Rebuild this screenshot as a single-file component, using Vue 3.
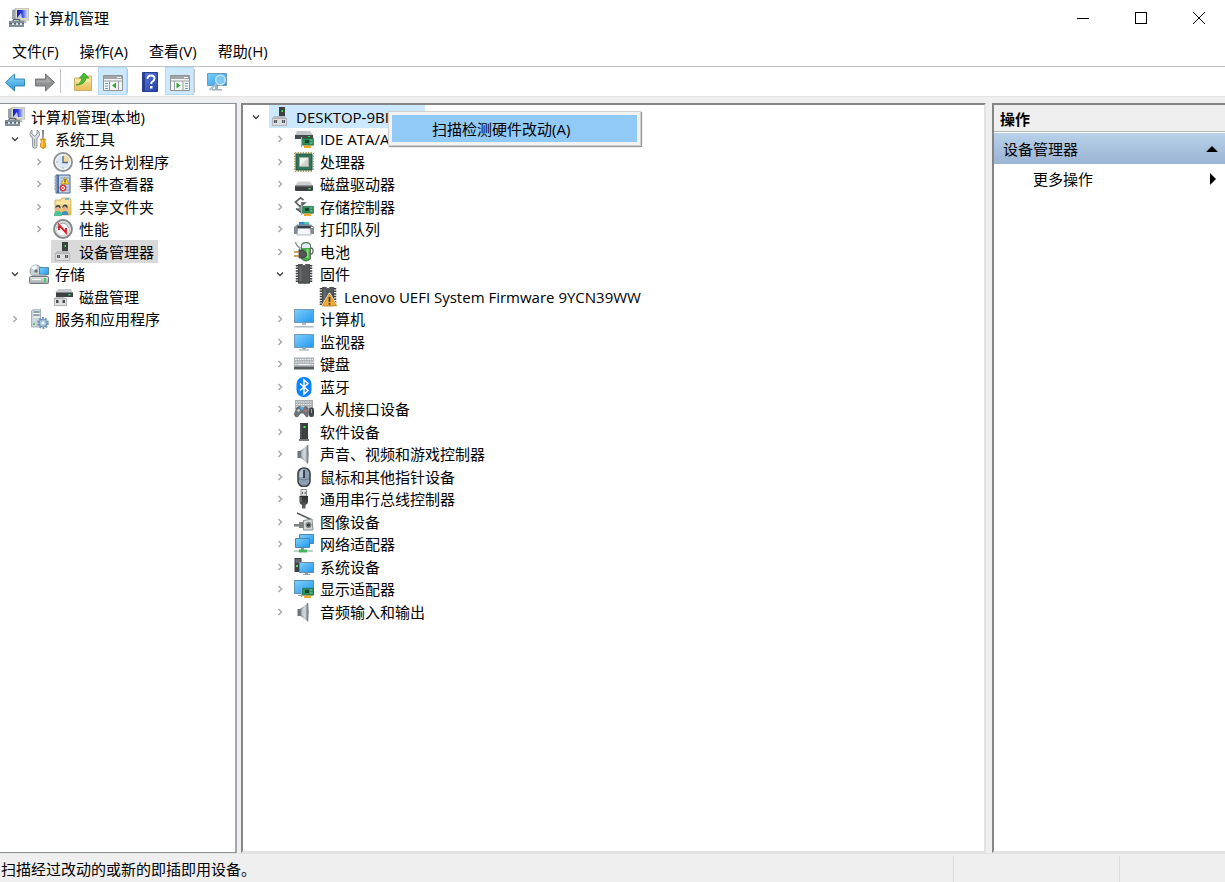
<script setup>
import { ref } from 'vue'

const menus = ['文件(F)', '操作(A)', '查看(V)', '帮助(H)']

const consoleTree = [
  { text: '计算机管理(本地)', icon: 'computer-mgmt', level: 0 },
  { text: '系统工具', icon: 'tools', level: 0, state: 'open' },
  { text: '任务计划程序', icon: 'clock', level: 1, state: 'closed' },
  { text: '事件查看器', icon: 'events', level: 1, state: 'closed' },
  { text: '共享文件夹', icon: 'shared', level: 1, state: 'closed' },
  { text: '性能', icon: 'perf', level: 1, state: 'closed' },
  { text: '设备管理器', icon: 'devmgr', level: 2, selected: true },
  { text: '存储', icon: 'storage', level: 0, state: 'open' },
  { text: '磁盘管理', icon: 'diskmgmt', level: 2 },
  { text: '服务和应用程序', icon: 'services', level: 0, state: 'closed' },
]

const deviceTree = [
  { text: 'DESKTOP-9BI4EJO', icon: 'devmgr', level: 0, state: 'open', selected: true },
  { text: 'IDE ATA/ATAPI 控制器', icon: 'ide', level: 1, state: 'closed' },
  { text: '处理器', icon: 'cpu', level: 1, state: 'closed' },
  { text: '磁盘驱动器', icon: 'disk', level: 1, state: 'closed' },
  { text: '存储控制器', icon: 'storctl', level: 1, state: 'closed' },
  { text: '打印队列', icon: 'printer', level: 1, state: 'closed' },
  { text: '电池', icon: 'battery', level: 1, state: 'closed' },
  { text: '固件', icon: 'firmware', level: 1, state: 'open' },
  { text: 'Lenovo UEFI System Firmware 9YCN39WW', icon: 'firmware-warn', level: 3 },
  { text: '计算机', icon: 'computer', level: 1, state: 'closed' },
  { text: '监视器', icon: 'monitor', level: 1, state: 'closed' },
  { text: '键盘', icon: 'keyboard', level: 1, state: 'closed' },
  { text: '蓝牙', icon: 'bluetooth', level: 1, state: 'closed' },
  { text: '人机接口设备', icon: 'hid', level: 1, state: 'closed' },
  { text: '软件设备', icon: 'software', level: 1, state: 'closed' },
  { text: '声音、视频和游戏控制器', icon: 'speaker', level: 1, state: 'closed' },
  { text: '鼠标和其他指针设备', icon: 'mouse', level: 1, state: 'closed' },
  { text: '通用串行总线控制器', icon: 'usb', level: 1, state: 'closed' },
  { text: '图像设备', icon: 'camera', level: 1, state: 'closed' },
  { text: '网络适配器', icon: 'network', level: 1, state: 'closed' },
  { text: '系统设备', icon: 'system', level: 1, state: 'closed' },
  { text: '显示适配器', icon: 'display', level: 1, state: 'closed' },
  { text: '音频输入和输出', icon: 'speaker', level: 1, state: 'closed' },
]

const trees = ref([
  { name: 'console', label: '控制台树', rows: consoleTree },
  { name: 'device', label: '设备', rows: deviceTree },
])
</script>

<template>
  <div class="window">
    <svg class="sprite" aria-hidden="true">
      <defs>
        <linearGradient id="g-screen" x1="0" y1="0" x2="1" y2="1">
          <stop offset="0" stop-color="#7fd0fb" /><stop offset="1" stop-color="#2196ee" />
        </linearGradient>
        <linearGradient id="g-blue" x1="0" y1="0" x2="1" y2="0">
          <stop offset="0" stop-color="#1a1fb8" /><stop offset="0.45" stop-color="#2838e0" /><stop offset="1" stop-color="#c5d2f8" />
        </linearGradient>
        <linearGradient id="g-metal" x1="0" y1="0" x2="0" y2="1">
          <stop offset="0" stop-color="#e4e6e8" /><stop offset="1" stop-color="#a3a7ab" />
        </linearGradient>
        <linearGradient id="g-dark" x1="0" y1="0" x2="0" y2="1">
          <stop offset="0" stop-color="#2a2c2d" /><stop offset="1" stop-color="#606466" />
        </linearGradient>
        <linearGradient id="g-cone" x1="0" y1="0" x2="1" y2="0">
          <stop offset="0" stop-color="#6b7379" /><stop offset="0.5" stop-color="#c3cbd1" /><stop offset="1" stop-color="#8b949b" />
        </linearGradient>
        <linearGradient id="g-folder" x1="0" y1="0" x2="0" y2="1">
          <stop offset="0" stop-color="#fbe7a4" /><stop offset="1" stop-color="#e7bd58" />
        </linearGradient>
        <linearGradient id="g-help" x1="0" y1="0" x2="1" y2="1">
          <stop offset="0" stop-color="#5b7bdc" /><stop offset="1" stop-color="#2340a8" />
        </linearGradient>
        <linearGradient id="g-arrow" x1="0" y1="0" x2="0" y2="1">
          <stop offset="0" stop-color="#8fdcfb" /><stop offset="1" stop-color="#2492d6" />
        </linearGradient>
      </defs>

      <symbol id="computer-mgmt" viewBox="0 0 20 20">
        <path d="M3 2L7 1v11l-4-1z" fill="#9ba3a8" />
        <path d="M6.300.3h13.400v12H6.300z" fill="#dcdbcc" stroke="#a6a69b" stroke-width=".6" />
        <path d="M8 2h10v8H8z" fill="url(#g-blue)" />
        <path d="M8 10l4-5 1 5z" fill="#eaf0ff" opacity=".8" />
        <path d="M11 12h5l2 3h-8z" fill="#b9bbb4" />
        <path d="M4 13q0-1.500 1.500-1.500h4q1.500 0 1.500 1.500" fill="none" stroke="#59666d" stroke-width="1.400" />
        <path d="M0 13h15v6H0z" fill="#7f8f97" />
        <path d="M0 15.500h15" stroke="#56646b" />
        <path d="M3 15h2v2H3zm4 0h2v2H7zm4 0h2v2h-2z" fill="#dce4e6" />
      </symbol>
      <symbol id="tools" viewBox="0 0 20 20">
        <path d="M3 1v4l2.500 2L8 5V1q3 2 2.500 5Q10 8 8 9v9q-2 2.500-4.500 0V9Q1 8 1 5.500 1 2 3 1z" fill="#d6dadc" stroke="#7f878b" stroke-width=".8" />
        <path d="M5.500 10v7" stroke="#989fa3" />
        <path d="M13 1h2l-.4 9h-1.200z" fill="#777d80" />
        <path d="M11.500 10h5l-.7 3 .9 2v3q-2.700 3-5.200 0v-3l.9-2z" fill="#f0a819" stroke="#bb790b" stroke-width=".7" />
        <path d="M13.200 11v7" stroke="#ffdd6a" />
      </symbol>
      <symbol id="clock" viewBox="0 0 20 20">
        <circle cx="10" cy="10" r="9" fill="#e8eef3" stroke="#8d9296" stroke-width="2" />
        <circle cx="10" cy="10" r="7.300" fill="#dce7f1" stroke="#fff" />
        <path d="M10 10V3a7 7 0 0 1 7 7z" fill="#f1d99b" />
        <path d="M10 4v6.500h5" fill="none" stroke="#476985" stroke-width="1.300" />
        <path d="M3.500 10h1M10 15.500v1" stroke="#587389" />
      </symbol>
      <symbol id="events" viewBox="0 0 20 20">
        <path d="M3 1h14v18H3z" fill="#c4d5ed" stroke="#49658d" />
        <path d="M4 1h2v18H4z" fill="#456ca9" />
        <path d="M7 4h9M7 7h9M7 10h9M7 13h9M7 16h9" stroke="#90a7ca" />
        <path d="M1 3h4M1 6h4M1 9h4M1 12h4M1 15h4" stroke="#8d9cae" />
        <path d="M12 3l4 7H8z" fill="#ffd736" stroke="#b2961d" stroke-width=".7" />
        <path d="M12 5v3M12 8.500v1" stroke="#333" />
        <circle cx="10" cy="14" r="3.400" fill="#d93737" />
        <circle cx="10" cy="14" r="1.500" fill="none" stroke="#fff" stroke-width="1" />
      </symbol>
      <symbol id="shared" viewBox="0 0 20 20">
        <path d="M2 3h6l1-2h8l1 3v14H2z" fill="url(#g-folder)" stroke="#caa04a" stroke-width=".7" />
        <path d="M12 2h4" stroke="#62aadb" stroke-width="1.500" />
        <path d="M3 6h14" stroke="#fff1bd" />
        <path d="M1 19q0-5 4-5t4 5z" fill="#4cc098" />
        <path d="M8.500 18q0-4 3.500-4t3.500 4z" fill="#3f8fc0" />
        <circle cx="5" cy="11.500" r="2.500" fill="#e4b38e" /><circle cx="12" cy="11" r="2.500" fill="#e4b38e" />
        <path d="M2.400 11q0-3 2.800-3 2.900 0 2.200 3.500L5 9.500zm7 0q0-3.500 2.800-3.500 2.900 0 2.300 4L12 9z" fill="#344349" />
      </symbol>
      <symbol id="perf" viewBox="0 0 20 20">
        <circle cx="10" cy="10" r="8.900" fill="#fff" stroke="#828789" stroke-width="2" />
        <circle cx="10" cy="10" r="7" fill="#f9f9f9" stroke="#c4c7c8" />
        <path d="M6 11V6l7 7.500V9" fill="none" stroke="#df2028" stroke-width="1.900" />
        <path d="M4 9q2-5 6-5t6 5" fill="none" stroke="#7f8688" stroke-width=".8" />
      </symbol>
      <symbol id="devmgr" viewBox="0 0 20 20">
        <path d="M9 0h6v10H9z" fill="#3b4041" />
        <path d="M11.500 3h1.500v2h-1.500z" fill="#35e852" />
        <path d="M4 9h11l2 3H2z" fill="#bcbdc0" />
        <path d="M2.400 11.400h14.200v7.200H2.400z" fill="#dcdde0" stroke="#a6a6ac" stroke-width=".8" />
        <path d="M4 13h3v3H4zm8 0h3v3h-3z" fill="#505355" />
        <path d="M5.500 13v3M13.500 13v3" stroke="#a6a9ab" stroke-width=".7" />
      </symbol>
      <symbol id="storage" viewBox="0 0 20 20">
        <circle cx="7" cy="7" r="6" fill="#c8d1d5" stroke="#97a3a9" />
        <path d="M7 7L2 4Q5 0 8 2z" fill="#f4fafb" /><circle cx="7" cy="7" r="1.700" fill="#65747b" />
        <path d="M10.500 3.500h9v7h-9z" fill="url(#g-screen)" stroke="#427792" stroke-width=".8" />
        <path d="M2 12.500l3-2h11l3 2z" fill="#aab6bc" />
        <path d="M.5 13.500q0-1 1-1h17q1 0 1 1v5q0 1-1 1h-17q-1 0-1-1z" fill="url(#g-metal)" stroke="#6b767b" />
        <path d="M15 14h2v4h-2z" fill="#35d74c" /><path d="M3 15.500h9" stroke="#fff" />
      </symbol>
      <symbol id="diskmgmt" viewBox="0 0 20 20">
        <path d="M5 2h13l2 4H2z" fill="#c9cccf" /><path d="M3 5.500h17V10H3z" fill="#3c4042" />
        <path d="M15.500 7h2v1.500h-2z" fill="#38e456" />
        <path d="M3 10h8l2 2H1z" fill="#c9cacd" /><path d="M1.400 11.400h12.200v7.200H1.400z" fill="#dfe0e2" stroke="#9a9da1" stroke-width=".8" />
        <path d="M3 13h2.500v3H3zm6.500 0H12v3H9.500z" fill="#4a4d4f" />
      </symbol>
      <symbol id="services" viewBox="0 0 20 20">
        <path d="M2.500 2l2-2h7v18h-9z" fill="#ccd6dc" stroke="#93a1a9" stroke-width=".8" />
        <path d="M4.500 3h6M4.500 6h6" stroke="#526b78" stroke-width="1.200" /><path d="M4.500 4.500h6M4.500 8h6" stroke="#fff" />
        <path d="M4 14h2v2H4z" fill="#56c965" />
        <circle cx="14" cy="14" r="4.900" fill="none" stroke="#6b93b8" stroke-width="2" stroke-dasharray="1.900 1.179" />
        <circle cx="14" cy="14" r="4" fill="#a7c0d7" stroke="#6189af" stroke-width=".8" /><circle cx="14" cy="14" r="1.600" fill="#f4f9fc" />
      </symbol>

      <symbol id="board" viewBox="0 0 20 20">
        <path d="M8.400 9.400h11v6.800h-11z" fill="#2b8f58" stroke="#17643f" stroke-width=".7" />
        <path d="M11 11h4v3h-4z" fill="#174631" /><path d="M16 11h2.500M16 14h2.500" stroke="#82cca0" />
        <path d="M10 16.500h7V19h-7z" fill="#f1a52a" /><path d="M7.500 8v10" stroke="#a3aeab" stroke-width="1.200" />
      </symbol>
      <symbol id="ide" viewBox="0 0 20 20">
        <path d="M3 2h13l3 4H1z" fill="#c4c7ca" /><path d="M1 6h18v4H1z" fill="#46494c" />
        <path d="M14 7h2v1h-2z" fill="#35e751" /><use href="#board" width="20" height="20" />
      </symbol>
      <symbol id="cpu" viewBox="0 0 20 20">
        <path d="M.7 1v18M19.300 1v18M1 .7h18M1 19.300h18" stroke="#b99a4c" stroke-dasharray="1.300 1.300" stroke-width="1.400" />
        <path d="M2 2h16v16H2z" fill="#327558" stroke="#1f5a43" />
        <path d="M5.500 5.500h9v9h-9z" fill="#d0d3d1" stroke="#a0ada5" /><path d="M6 14V6h8z" fill="#f1f2ef" />
      </symbol>
      <symbol id="disk" viewBox="0 0 20 20">
        <path d="M4 7.500h12l3 4H1z" fill="#cfd1d3" /><path d="M1 11.500h18V16q0 1-1 1H2q-1 0-1-1z" fill="#3d4042" /><path d="M1 12h18" stroke="#858789" />
        <path d="M14.500 14h2v1.500h-2z" fill="#3cea58" />
      </symbol>
      <symbol id="storctl" viewBox="0 0 20 20">
        <path d="M9.500 3L6.500.8 1.500 5l4.500 4.500L10.500 6H7" fill="none" stroke="#5c6062" stroke-width="1.700" />
        <path d="M2 12l5-2 1 6z" fill="#8a8d8f" /><path d="M2 11.500L8 16" stroke="#4d5052" stroke-width="1.500" /><use href="#board" width="20" height="20" />
      </symbol>
      <symbol id="printer" viewBox="0 0 20 20">
        <path d="M5 3h10v5H5z" fill="#268be1" /><path d="M10 3h5v2.500h-5z" fill="#4fc7b4" />
        <path d="M3 5.500h14L20 8v7h-4v-4H4v4H0V8z" fill="#858c91" /><path d="M3.500 7h13v2.500h-13z" fill="#363f44" />
        <path d="M4 9.500h12l1 6.500H3z" fill="#f4f6f8" stroke="#9ba5ab" stroke-width=".7" /><path d="M17 8h2v1h-2z" fill="#fff" />
      </symbol>
      <symbol id="battery" viewBox="0 0 20 20">
        <path d="M7.500 3q0-2.500 4.500-2.500T16.500 3v14q-4.500 4-9 0z" fill="#42ad47" stroke="#4f5b52" stroke-width=".8" /><path d="M8 3q4-3.500 8 0v3H8z" fill="#e6ebfa" />
        <path d="M13.500 7v9" stroke="#88e476" stroke-width="2" />
        <path d="M16.500 6q3 0 2.500 3.500-.5 3-3 3" stroke="#606466" stroke-width="1.300" fill="none" />
        <path d="M1.500 0q1 4.500 4.500 5.500l-1 3" fill="none" stroke="#8b8f8f" stroke-width="1.300" />
        <path d="M5 8h4l3.500 3v3L9 16H5z" fill="#545655" stroke="#35393a" stroke-width=".8" /><path d="M0 10h5M0 14h5" stroke="#b38534" stroke-width="1.600" />
      </symbol>
      <symbol id="firmware" viewBox="0 0 20 20">
        <path d="M3 1v18M17 1v18" stroke="#3a3c3e" stroke-width="2.500" stroke-dasharray="1.500 1.100" />
        <path d="M4.400.4H8q2 3 4 0h3.600v18.800H4.400z" fill="#55585a" stroke="#303234" stroke-width=".8" /><path d="M5.500 3h2v14h-2z" fill="#696c6e" />
      </symbol>
      <symbol id="firmware-warn" viewBox="0 0 20 20">
        <use href="#firmware" width="20" height="20" /><path d="M11.500 6.500l7.500 12.500H4z" fill="#f4b33d" stroke="#fff3d6" stroke-width="1.600" stroke-linejoin="round" />
        <path d="M11.500 7l7 11.700h-14z" fill="#f0ac33" stroke="#bd7a14" stroke-width=".7" />
        <path d="M11.500 10v5M11.500 16v1.700" stroke="#333" stroke-width="1.700" />
      </symbol>
      <symbol id="computer" viewBox="0 0 20 20">
        <path d="M.5.5h19v13H.5z" fill="url(#g-screen)" stroke="#6f9ab8" /><path d="M8 14h4v2H8z" fill="#b3bec4" />
        <path d="M1 17h18l1 1.500H0z" fill="#aebac1" />
      </symbol>
      <symbol id="monitor" viewBox="0 0 20 20">
        <path d="M.5 2.500h19v13H.5z" fill="url(#g-screen)" stroke="#6f9ab8" /><path d="M8 16h4v1.500H8z" fill="#a5b3ba" /><path d="M5 18h10" stroke="#91a0a7" />
      </symbol>
      <symbol id="keyboard" viewBox="0 0 20 20">
        <path d="M0 3.500h20v9H0z" fill="#adb2b6" /><path d="M0 12.500h20v3H0z" fill="#565c60" />
        <path d="M1 5.500h18M1.500 8h18M1 10.500h4M15 10.500h4" stroke="#eef1f2" stroke-width="1.200" stroke-dasharray="1.600 .8" /><path d="M5 10.500h10" stroke="#edf1f2" stroke-width="1.200" />
      </symbol>
      <symbol id="bluetooth" viewBox="0 0 20 20">
        <rect x="2.500" y="0" width="15" height="20" rx="7" fill="#0a84ff" />
        <path d="M6 6.500l8 7L10 17V3l4 3.500-8 7" fill="none" stroke="#fff" stroke-width="1.500" />
      </symbol>
      <symbol id="hid" viewBox="0 0 20 20">
        <path d="M1 1h18v9H1z" fill="#a9aeb1" /><path d="M2 3h16M2 5.500h16M2 8h16" stroke="#eef1f2" stroke-dasharray="1.500 .8" />
        <path d="M2.500 9l3-1.500L7.500 9h2l2-1.500q2.500 0 3 5l-.5 5-1.500.5-3-4h-3l-3 4Q.5 18 .5 15z" fill="#6c757c" stroke="#4c555a" stroke-width=".7" />
        <circle cx="4.500" cy="11.500" r="1.300" fill="#d1dade" /><circle cx="11.500" cy="11.500" r="1.200" fill="#e2685a" /><path d="M6.500 8h3v2.500h-3z" fill="#4db2f0" />
        <rect x="15" y="8.500" width="5" height="9.500" rx="2" fill="#3f474c" /><path d="M17.500 10v4" stroke="#9aacba" />
      </symbol>
      <symbol id="software" viewBox="0 0 20 20">
        <path d="M6 1h8v16H6z" fill="#3b3f40" /><path d="M7 2v14" stroke="#626768" /><path d="M9.500 4h2v2h-2z" fill="#3df34a" /><path d="M5 17h10v2H5z" fill="#74797b" />
      </symbol>
      <symbol id="speaker" viewBox="0 0 20 20">
        <path d="M3.500 7H7v7H3.500z" fill="#6b747b" />
        <path d="M6 7l8-6q1.500 9 0 18.500l-8-6z" fill="url(#g-cone)" />
        <path d="M7.500 7.500L12 4v12.500L7.500 13z" fill="#d0d8de" opacity=".7" />
        <path d="M13.500 1v18.500" stroke="#7d868d" stroke-width="1.400" />
      </symbol>
      <symbol id="mouse" viewBox="0 0 20 20">
        <rect x="4" y="1" width="12" height="18.500" rx="5.500" fill="#8d9fb2" stroke="#3d454b" stroke-width="1.600" />
        <path d="M5.500 8q0-5 4-6v8h-4z" fill="#b9c6d2" /><path d="M10 3v8" stroke="#1e2b34" stroke-width="1.600" /><path d="M5 12q5 2 10 0" fill="none" stroke="#66798c" stroke-width=".8" />
      </symbol>
      <symbol id="usb" viewBox="0 0 20 20">
        <path d="M7 .5h5.500V7H7z" fill="#e2e4e5" stroke="#8f9294" /><path d="M8.500 3v2M11.200 3v2" stroke="#555" />
        <path d="M5.500 7h8.500v6q0 2-2.500 3v3.500H8V16q-2.500-1-2.500-3z" fill="url(#g-dark)" /><path d="M7 8v5" stroke="#888" />
      </symbol>
      <symbol id="camera" viewBox="0 0 20 20">
        <path d="M3 1l15 7" stroke="#565b5d" stroke-width="1.500" /><path d="M9.500 8.500L18 7l1 11H9.500z" fill="#d5d8d8" stroke="#8a8f90" />
        <path d="M5 10h4.500v6H5zM0 12h5v2.500H0z" fill="#7d8283" /><circle cx="14.500" cy="13" r="3" fill="#7b8183" /><circle cx="14.500" cy="13" r="1.500" fill="#243238" />
      </symbol>
      <symbol id="network" viewBox="0 0 20 20">
        <path d="M5.500.5h14v9h-14z" fill="url(#g-screen)" stroke="#4f86aa" /><path d="M1.500 4.500h14v9h-14z" fill="url(#g-screen)" stroke="#4f86aa" /><path d="M7 14h3v2H7z" fill="#7d939c" />
        <path d="M0 17h19" stroke="#b9d4c0" stroke-width="2" /><path d="M5 15.500h8v3H5z" fill="#43b45c" />
      </symbol>
      <symbol id="system" viewBox="0 0 20 20">
        <path d="M.5 1h7v14h-7z" fill="#3b4145" /><path d="M1.500 3h5M1.500 5h5" stroke="#8a9298" /><path d="M2 8h2v2H2z" fill="#4be360" />
        <path d="M5.500 5.500h14v10h-14z" fill="url(#g-screen)" stroke="#6b8c9e" /><path d="M11 16h3v1h-3zM9 17h7v1H9z" fill="#91a2aa" />
      </symbol>
      <symbol id="display" viewBox="0 0 20 20">
        <path d="M.5 1.500h19v13H.5z" fill="url(#g-screen)" stroke="#5d8dac" /><path d="M4 16.500h4" stroke="#8b9ba3" /><use href="#board" width="20" height="20" />
      </symbol>

      <symbol id="back" viewBox="0 0 20 20">
        <path d="M9.500 2v5h10v7h-10v5l-9-8.500z" fill="url(#g-arrow)" stroke="#2b80b3" stroke-width=".9" stroke-linejoin="round" />
      </symbol>
      <symbol id="forward" viewBox="0 0 20 20">
        <path d="M10.500 2v5H.5v7h10v5l9-8.500z" fill="#8f9192" stroke="#6b6e70" stroke-width=".9" stroke-linejoin="round" /><path d="M11.500 5v3.500h-10v2h15.500z" fill="#a7a9aa" />
      </symbol>
      <symbol id="folder-up" viewBox="0 0 20 20">
        <path d="M1.500 6h6l2-2h9v14.500h-17z" fill="url(#g-folder)" stroke="#cfae66" /><path d="M2 9h16" stroke="#fff2c0" />
        <path d="M3 13q5-1 6-7H6.500L11 1l5 5h-3q-1 7-10 7z" fill="#49bd31" stroke="#2f9a28" stroke-width=".8" />
      </symbol>
      <symbol id="pane-left" viewBox="0 0 20 20">
        <path d="M.5 3.500h19v15H.5z" fill="#f4f5f5" stroke="#909496" /><path d="M1 4h18v3H1z" fill="#a0a5a8" /><path d="M14 5.500h4" stroke="#fff" />
        <path d="M1 9h18M6.500 9v9M15.500 9v9" stroke="#9a9fa1" /><path d="M2 11.500h3M2 14h3M2 16.500h3" stroke="#5f9fc9" /><path d="M13 10.500v6l-4-3z" fill="#31ab2d" />
      </symbol>
      <symbol id="pane-right" viewBox="0 0 20 20">
        <path d="M.5 3.500h19v15H.5z" fill="#f4f5f5" stroke="#909496" /><path d="M1 4h18v3H1z" fill="#a0a5a8" /><path d="M14 5.500h4" stroke="#fff" />
        <path d="M1 9h18M13 9v9M4.500 9v9" stroke="#9a9fa1" /><path d="M15 11.500h3M15 14h3M15 16.500h3" stroke="#5f9fc9" /><path d="M6.500 10.500v6l4-3z" fill="#31ab2d" />
      </symbol>
      <symbol id="help" viewBox="0 0 20 20">
        <path d="M2.500.5h15v19h-15z" fill="url(#g-help)" stroke="#243c91" /><path d="M4 1v18" stroke="#203276" stroke-width="1.500" />
        <path d="M7.500 7q0-3.500 3.500-3.500t3.500 3q0 1.800-2 3-1.300.8-1.300 2.500" fill="none" stroke="#fff" stroke-width="1.900" /><path d="M10 14h2.500v2.500H10z" fill="#fff" />
      </symbol>
      <symbol id="scan" viewBox="0 0 20 20">
        <path d="M.5 1.500h19v12H.5z" fill="url(#g-screen)" stroke="#6c9cb8" /><path d="M8 14h3v3H8zM5 17h10v1.500H5z" fill="#9fb0b8" />
        <circle cx="13.500" cy="8" r="4.800" fill="#7cc9f5" stroke="#c9dfea" stroke-width="1.500" /><path d="M9.500 12l-7 6" stroke="#a3bfcc" stroke-width="2.300" />
      </symbol>
    </svg>

    <header class="titlebar">
      <svg class="icon"><use href="#computer-mgmt" /></svg>
      <h1>计算机管理</h1>
      <div class="controls">
        <button aria-label="最小化"><svg viewBox="0 0 12 12"><path d="M0 6.500h12" /></svg></button>
        <button aria-label="最大化"><svg viewBox="0 0 12 12"><path d="M.5.5h11v11H.5z" /></svg></button>
        <button aria-label="关闭"><svg class="smooth" viewBox="0 0 12 12"><path d="M0 0l12 12M12 0L0 12" /></svg></button>
      </div>
    </header>

    <nav class="menubar">
      <button v-for="menu in menus" :key="menu">{{ menu }}</button>
    </nav>

    <div class="toolbar" role="toolbar">
      <button aria-label="后退"><svg class="icon"><use href="#back" /></svg></button>
      <button aria-label="前进"><svg class="icon"><use href="#forward" /></svg></button>
      <i class="sep"></i>
      <button aria-label="上移一级"><svg class="icon"><use href="#folder-up" /></svg></button>
      <button class="on" aria-label="显示控制台树"><svg class="icon"><use href="#pane-left" /></svg></button>
      <i class="sep"></i>
      <button aria-label="帮助"><svg class="icon"><use href="#help" /></svg></button>
      <button class="on" aria-label="显示操作窗格"><svg class="icon"><use href="#pane-right" /></svg></button>
      <i class="sep"></i>
      <button aria-label="扫描"><svg class="icon"><use href="#scan" /></svg></button>
    </div>

    <main class="panes">
      <section v-for="tree in trees" :key="tree.name" class="pane" :class="tree.name">
        <ul class="tree" :aria-label="tree.label">
          <li v-for="row in tree.rows" :key="row.text" :class="'level-' + row.level">
            <button v-if="row.state" class="twisty" :class="row.state" :aria-label="row.state === 'open' ? '折叠' : '展开'">
              <svg viewBox="0 0 10 10"><path d="M3.500 2l3 3-3 3" /></svg>
            </button>
            <button class="node" :class="{ selected: row.selected }">
              <svg class="icon"><use :href="'#' + row.icon" /></svg>
              <span>{{ row.text }}</span>
            </button>
          </li>
        </ul>
        <div v-if="tree.name === 'device'" class="context" role="menu">
          <button role="menuitem">扫描检测硬件改动(A)</button>
        </div>
      </section>

      <aside class="pane actions">
        <h2>操作</h2>
        <button class="group">设备管理器<svg viewBox="0 0 12 12"><path d="M0 9l6-6 6 6z" /></svg></button>
        <button class="more">更多操作<svg viewBox="0 0 12 12"><path d="M3 0l6 6-6 6z" /></svg></button>
      </aside>
    </main>

    <footer class="status">
      <span>扫描经过改动的或新的即插即用设备。</span><span></span><span></span>
    </footer>
  </div>
</template>

<style>
body { margin: 0; }
</style>

<style scoped>
.window {
  box-sizing: border-box;
  display: grid;
  grid-template-rows: auto auto auto 1fr auto;
  min-height: 100vh;
  background: #fff;
  color: #000;
  font: 15px/22px "Open Sans", "Noto Sans CJK SC", sans-serif;
}
.sprite { position: absolute; width: 0; height: 0; }
button { padding: 0; border: 0; background: none; color: inherit; font: inherit; white-space: nowrap; }
h1, h2, ul { margin: 0; padding: 0; font: inherit; list-style: none; }
.icon { flex: none; display: block; width: 20px; height: 20px; }

.titlebar { display: flex; align-items: center; height: 36px; padding-left: 9px; }
.titlebar h1 { margin-left: 5px; }
.controls { display: flex; gap: 6px; margin-left: auto; }
.controls button { display: grid; place-items: center; width: 52px; height: 36px; }
.controls svg { width: 12px; height: 12px; fill: none; stroke: #000; shape-rendering: crispEdges; }
.controls .smooth { shape-rendering: auto; overflow: visible; }

.menubar { display: flex; gap: 21px; height: 30px; padding-left: 12px; border-bottom: 1px solid #bfc1c4; }

.toolbar { display: flex; gap: 1px; height: 28px; padding-bottom: 1px; border-bottom: 1px solid #e3e3e3; }
.toolbar button { box-sizing: border-box; display: grid; place-items: center; width: 29px; height: 28px; padding-top: 1px; border: 1px solid transparent; }
.toolbar .on { border-color: #b5dcfb; background: #cce8ff; }
.sep { width: 1px; margin: 2px 6px 2px 0; background: #c3c3c3; }
.on + .sep { margin-left: -1px; }

.panes {
  display: grid;
  grid-template-columns: 237px minmax(0, 1fr) 233px;
  padding-top: 6px;
  background: #efefef;
}
.pane { background: #fff; }
.console { border: solid #8d9199; border-width: 1px 2px 1px 0; padding-top: 1px; border-right-color: #a4a8ae; }
.device { position: relative; margin: 0 6px 0 4px; border: 2px solid #858585; border-right-color: #e3e3e3; border-bottom-color: #e3e3e3; }
.actions { border: solid #858585; border-width: 2px 0 2px 2px; border-bottom-color: #e3e3e3; }

.tree li { display: flex; align-items: center; gap: 3px; height: 23px; }
.tree li:nth-child(even) { height: 22px; }
.console .tree li { padding-left: 4px; }
.device .tree li { padding-left: 3px; }
.console .tree .level-1 { padding-left: 29px; }
.console .tree .level-2 { padding-left: 51px; }
.console .tree li:not(:first-child).level-0 { padding-left: 5px; }
.device .tree .level-1 { padding-left: 27px; }
.device .tree .level-3 { padding-left: 74px; }
.twisty { display: grid; place-items: center; width: 20px; height: 20px; }
.twisty svg { width: 10px; height: 10px; fill: none; stroke: #a2a2a2; stroke-width: 1.3; }
.twisty.open svg { transform: rotate(90deg); stroke: #404040; }
.node { display: flex; align-items: center; gap: 6px; height: 100%; padding: 0 4px 0 1px; }
.console .level-2 .node { padding-left: 2px; }
.console .selected { background: #d9d9d9; }
.device .selected { background: #cce8ff; }

.context {
  position: absolute;
  top: 6px;
  left: 145px;
  box-sizing: border-box;
  width: 253px;
  padding: 3px;
  border: 1px solid #d0d0d0;
  background: #f2f2f2;
  box-shadow: 1px 1px 1px #999;
}
.context button { display: block; width: 100%; height: 27px; padding-left: 40px; background: #91c9f7; text-align: left; }

.actions h2 { height: 26px; padding-left: 6px; border-bottom: 1px solid #b4b4b4; background: #efefef; font-weight: 700; line-height: 28px; }
.actions button { display: flex; align-items: center; justify-content: space-between; width: 100%; height: 31px; padding: 0 7px 0 9px; }
.actions .group { margin-top: 1px; background: linear-gradient(#b8d1ea, #9ab4d3); }
.actions .more { height: 29px; padding: 0 6px 0 39px; }
.actions svg { width: 12px; height: 12px; }

.status { display: grid; grid-template-columns: minmax(0, 1fr) 166px 106px; height: 28px; border-top: 1px solid #e3e3e3; background: #efefef; }
.status span { margin-top: 2px; padding-left: 1px; line-height: 26px; }
.status span + span { border-left: 1px solid #dcdcdc; }
</style>
